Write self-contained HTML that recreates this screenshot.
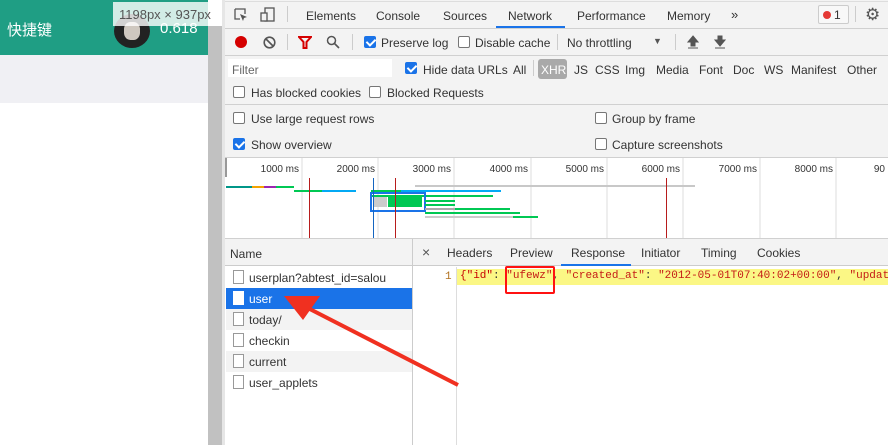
<!DOCTYPE html>
<html><head><meta charset="utf-8"><style>
*{box-sizing:border-box;margin:0;padding:0}
body{width:888px;height:445px;overflow:hidden;position:relative;font-family:"Liberation Sans","Noto Sans CJK SC",sans-serif;font-size:12px;color:#333;background:#fff}
.a{position:absolute}
.t{position:absolute;white-space:nowrap}
.cb{position:absolute;width:12px;height:12px;border:1px solid #767676;border-radius:2px;background:#fff}
.cb.on{background:#1a73e8;border-color:#1a73e8}
.cb.on::after{content:"";position:absolute;left:3px;top:0px;width:4px;height:7px;border:solid #fff;border-width:0 2px 2px 0;transform:rotate(45deg)}
.hl{position:absolute;height:1px;background:#d0d0d0}
.file{position:absolute;left:233px;width:11px;height:14px;border:1px solid #999;background:#fff}
</style></head><body>
<div class="a" style="left:0;top:0;width:208px;height:55px;background:#1f9e84"></div>
<div class="t" style="left:7px;top:19px;color:#fff;font-size:15px">快捷键</div>
<div class="a" style="left:114px;top:14px;width:36px;height:34px;border-radius:50%;background:#222"></div>
<div class="a" style="left:124px;top:22px;width:16px;height:18px;border-radius:40%;background:#cfc8c0"></div>
<div class="t" style="left:160px;top:20px;color:#fff;font-size:15px">0.618</div>
<div class="a" style="left:113px;top:2px;width:109px;height:24px;background:rgba(255,255,255,.8)"></div>
<div class="t" style="left:119px;top:7px;color:#555;font-size:13px">1198px × 937px</div>
<div class="a" style="left:0;top:55px;width:208px;height:48px;background:#f0f0f4"></div>
<div class="a" style="left:208px;top:26px;width:14px;height:419px;background:#c1c1c1"></div>
<div class="a" style="left:222px;top:0;width:3px;height:445px;background:#e6e6e6"></div>
<div class="a" style="left:225px;top:0;width:663px;height:157px;background:#f3f3f3"></div>
<div class="hl" style="left:225px;top:1px;width:663px;background:#ddd"></div>
<div class="hl" style="left:225px;top:28px;width:663px"></div>
<div class="hl" style="left:225px;top:55px;width:663px"></div>
<div class="hl" style="left:225px;top:104px;width:663px"></div>
<div class="hl" style="left:225px;top:157px;width:663px"></div>
<svg class="a" style="left:234px;top:8px" width="14" height="14"><path d="M1 1h10v5M1 1v10h5" fill="none" stroke="#555" stroke-width="1.3"/><path d="M6 6l7 3-3 1 -1 3z" fill="#555"/></svg>
<svg class="a" style="left:260px;top:7px" width="16" height="16"><rect x="5" y="1" width="9" height="13" fill="none" stroke="#555" stroke-width="1.3"/><rect x="1" y="6" width="6" height="8" fill="#f3f3f3" stroke="#555" stroke-width="1.3"/></svg>
<div class="a" style="left:287px;top:6px;width:1px;height:16px;background:#ccc"></div>
<div class="t" style="left:306px;top:9px">Elements</div>
<div class="t" style="left:376px;top:9px">Console</div>
<div class="t" style="left:443px;top:9px">Sources</div>
<div class="t" style="left:508px;top:9px">Network</div>
<div class="a" style="left:496px;top:26px;width:69px;height:2px;background:#1a73e8"></div>
<div class="t" style="left:577px;top:9px">Performance</div>
<div class="t" style="left:667px;top:9px">Memory</div>
<div class="t" style="left:731px;top:7px;font-size:13px">»</div>
<div class="a" style="left:818px;top:5px;width:31px;height:19px;border:1px solid #ccc;border-radius:2px;background:#f8f8f8"></div>
<div class="a" style="left:823px;top:11px;width:8px;height:8px;border-radius:50%;background:#e53935"></div>
<div class="t" style="left:834px;top:8px">1</div>
<div class="a" style="left:855px;top:6px;width:1px;height:16px;background:#ccc"></div>
<div class="t" style="left:865px;top:5px;font-size:17px;color:#555">⚙</div>
<div class="a" style="left:235px;top:36px;width:12px;height:12px;border-radius:50%;background:#d50000"></div>
<svg class="a" style="left:263px;top:36px" width="13" height="13"><circle cx="6.5" cy="6.5" r="5.3" fill="none" stroke="#555" stroke-width="1.6"/><path d="M3 3l7 7" stroke="#555" stroke-width="1.6"/></svg>
<div class="a" style="left:287px;top:34px;width:1px;height:16px;background:#ccc"></div>
<svg class="a" style="left:298px;top:36px" width="14" height="13"><path d="M1 1h12l-4.5 5v6h-3v-6z" fill="none" stroke="#d50000" stroke-width="2"/></svg>
<svg class="a" style="left:326px;top:35px" width="14" height="14"><circle cx="5.5" cy="5.5" r="4" fill="none" stroke="#555" stroke-width="1.5"/><path d="M8.5 8.5l4.5 4.5" stroke="#555" stroke-width="1.6"/></svg>
<div class="a" style="left:352px;top:34px;width:1px;height:16px;background:#ccc"></div>
<div class="cb on" style="left:364px;top:36px"></div>
<div class="t" style="left:381px;top:36px">Preserve log</div>
<div class="cb" style="left:458px;top:36px"></div>
<div class="t" style="left:475px;top:36px">Disable cache</div>
<div class="a" style="left:557px;top:34px;width:1px;height:16px;background:#ccc"></div>
<div class="t" style="left:567px;top:36px">No throttling</div>
<div class="t" style="left:653px;top:36px;font-size:9px;color:#555">▼</div>
<div class="a" style="left:675px;top:34px;width:1px;height:16px;background:#ccc"></div>
<svg class="a" style="left:687px;top:35px" width="12" height="14"><path d="M6 1l5 6h-3v4h-4v-4h-3z M1 13h10" fill="#555" stroke="#555"/></svg>
<svg class="a" style="left:714px;top:35px" width="12" height="14"><path d="M6 11l5-6h-3v-4h-4v4h-3z M1 13h10" fill="#555" stroke="#555"/></svg>
<div class="a" style="left:228px;top:59px;width:164px;height:18px;background:#fff"></div>
<div class="t" style="left:232px;top:63px;color:#666">Filter</div>
<div class="cb on" style="left:405px;top:62px"></div>
<div class="t" style="left:423px;top:63px">Hide data URLs</div>
<div class="t" style="left:513px;top:63px">All</div>
<div class="a" style="left:533px;top:60px;width:1px;height:16px;background:#ccc"></div>
<div class="a" style="left:538px;top:59px;width:29px;height:20px;border-radius:3px;background:#a9a9a9"></div>
<div class="t" style="left:541px;top:63px;color:#fff">XHR</div>
<div class="t" style="left:574px;top:63px">JS</div>
<div class="t" style="left:595px;top:63px">CSS</div>
<div class="t" style="left:625px;top:63px">Img</div>
<div class="t" style="left:656px;top:63px">Media</div>
<div class="t" style="left:699px;top:63px">Font</div>
<div class="t" style="left:733px;top:63px">Doc</div>
<div class="t" style="left:764px;top:63px">WS</div>
<div class="t" style="left:791px;top:63px">Manifest</div>
<div class="t" style="left:847px;top:63px">Other</div>
<div class="cb" style="left:233px;top:86px"></div>
<div class="t" style="left:251px;top:86px">Has blocked cookies</div>
<div class="cb" style="left:369px;top:86px"></div>
<div class="t" style="left:387px;top:86px">Blocked Requests</div>
<div class="cb" style="left:233px;top:112px"></div>
<div class="t" style="left:251px;top:112px">Use large request rows</div>
<div class="cb" style="left:595px;top:112px"></div>
<div class="t" style="left:612px;top:112px">Group by frame</div>
<div class="cb on" style="left:233px;top:138px"></div>
<div class="t" style="left:251px;top:138px">Show overview</div>
<div class="cb" style="left:595px;top:138px"></div>
<div class="t" style="left:612px;top:138px">Capture screenshots</div>
<svg class="a" style="left:225px;top:158px" width="663" height="81">
<rect width="663" height="81" fill="#fff"/>
<rect x="0" y="0" width="2" height="19" fill="#999"/>
<g stroke="#ddd"><path d="M77 0v81M153 0v81M229 0v81M306 0v81M382 0v81M458 0v81M535 0v81M611 0v81"/></g>
<g font-family="Liberation Sans,sans-serif" font-size="10" fill="#333" text-anchor="end">
<text x="74" y="14">1000 ms</text><text x="150" y="14">2000 ms</text><text x="226" y="14">3000 ms</text><text x="303" y="14">4000 ms</text><text x="379" y="14">5000 ms</text><text x="455" y="14">6000 ms</text><text x="532" y="14">7000 ms</text><text x="608" y="14">8000 ms</text><text x="660" y="14">90</text></g>
<rect x="1" y="28" width="26" height="2" fill="#009688"/><rect x="27" y="28" width="12" height="2" fill="#f4a300"/><rect x="39" y="28" width="12" height="2" fill="#9c27b0"/><rect x="51" y="28" width="18" height="2" fill="#00c853"/>
<rect x="69" y="32" width="28" height="2" fill="#00c853"/><rect x="97" y="32" width="34" height="2" fill="#03a9f4"/>
<rect x="190" y="27" width="280" height="2" fill="#c8c8c8"/>
<rect x="146" y="32" width="30" height="2" fill="#00c853"/><rect x="176" y="32" width="100" height="2" fill="#03a9f4"/>
<rect x="146" y="37" width="50" height="2" fill="#00c853"/><rect x="196" y="37" width="72" height="2" fill="#00c853"/>
<rect x="146" y="35" width="54" height="18" fill="none" stroke="#1a73e8" stroke-width="2"/>
<rect x="149" y="39" width="13" height="10" fill="#ccc"/><rect x="163" y="39" width="34" height="10" fill="#00c853"/>
<rect x="200" y="42" width="30" height="2" fill="#00c853"/><rect x="200" y="46" width="30" height="2" fill="#00c853"/>
<rect x="200" y="50" width="30" height="2" fill="#aaa"/><rect x="230" y="50" width="55" height="2" fill="#00c853"/>
<rect x="200" y="54" width="95" height="2" fill="#00c853"/>
<rect x="200" y="58" width="88" height="2" fill="#ccc"/><rect x="288" y="58" width="25" height="2" fill="#00c853"/>
<rect x="84" y="20" width="1" height="61" fill="#b71c1c"/><rect x="148" y="20" width="1" height="61" fill="#1565c0"/><rect x="170" y="20" width="1" height="61" fill="#b71c1c"/><rect x="441" y="20" width="1" height="61" fill="#b71c1c"/>
</svg>
<div class="hl" style="left:225px;top:238px;width:663px"></div>
<div class="a" style="left:225px;top:239px;width:188px;height:206px;background:#fff;border-right:1px solid #ccc"></div>
<div class="a" style="left:225px;top:239px;width:188px;height:27px;background:#f3f3f3;border-bottom:1px solid #ccc;border-right:1px solid #ccc"></div>
<div class="t" style="left:230px;top:247px">Name</div>
<div class="file" style="top:270px"></div><div class="t" style="left:249px;top:271px">userplan?abtest_id=salou</div>
<div class="a" style="left:226px;top:288px;width:186px;height:21px;background:#1a73e8"></div>
<div class="file" style="top:291px;border-color:#fff"></div><div class="t" style="left:249px;top:292px;color:#fff">user</div>
<div class="a" style="left:226px;top:309px;width:186px;height:21px;background:#f3f3f3"></div>
<div class="file" style="top:312px"></div><div class="t" style="left:249px;top:313px">today/</div>
<div class="file" style="top:333px"></div><div class="t" style="left:249px;top:334px">checkin</div>
<div class="a" style="left:226px;top:351px;width:186px;height:21px;background:#f3f3f3"></div>
<div class="file" style="top:354px"></div><div class="t" style="left:249px;top:355px">current</div>
<div class="file" style="top:375px"></div><div class="t" style="left:249px;top:376px">user_applets</div>
<div class="a" style="left:413px;top:239px;width:475px;height:27px;background:#f3f3f3;border-bottom:1px solid #ccc"></div>
<div class="t" style="left:422px;top:244px;font-size:14px;color:#555">×</div>
<div class="t" style="left:447px;top:246px">Headers</div>
<div class="t" style="left:510px;top:246px">Preview</div>
<div class="t" style="left:571px;top:246px">Response</div>
<div class="a" style="left:561px;top:264px;width:70px;height:2px;background:#1a73e8"></div>
<div class="t" style="left:641px;top:246px">Initiator</div>
<div class="t" style="left:701px;top:246px">Timing</div>
<div class="t" style="left:757px;top:246px">Cookies</div>
<div class="a" style="left:456px;top:267px;width:1px;height:178px;background:#ddd"></div>
<div class="t" style="left:445px;top:271px;font-family:'Liberation Mono',monospace;font-size:11px;color:#b07020">1</div>
<div class="a" style="left:457px;top:269px;width:431px;height:16px;background:#fbf785"></div>
<div class="t" style="left:460px;top:270px;font-family:'Liberation Mono',monospace;font-size:11px;color:#333"><span style="color:#c80000">{"id"</span>: <span style="color:#c41a16">"ufewz"</span>, <span style="color:#c41a16">"created_at"</span>: <span style="color:#c41a16">"2012-05-01T07:40:02+00:00"</span>, <span style="color:#c41a16">"updat</span></div>
<div class="a" style="left:505px;top:266px;width:50px;height:28px;border:2.5px solid #f11;border-radius:2px"></div>
<svg class="a" style="left:0;top:0" width="888" height="445"><path d="M458 385L300 304" stroke="#f03020" stroke-width="4"/><path d="M284 296L320 296L303 320z" fill="#f03020"/></svg>
</body></html>
